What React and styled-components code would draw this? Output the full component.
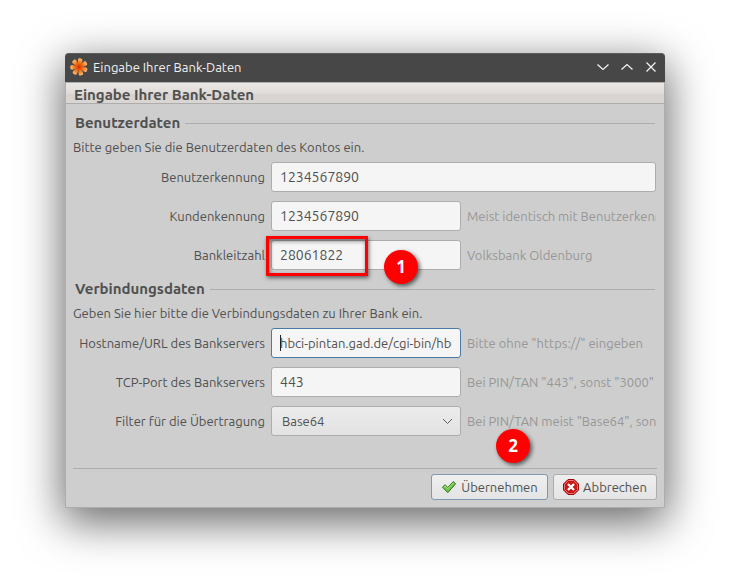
import React from 'react';
import styled, { createGlobalStyle, css } from 'styled-components';

const GlobalStyle = createGlobalStyle`
  *, *::before, *::after { box-sizing: border-box; }
  body {
    margin: 0;
    background: #ffffff;
    color: #505050;
    font: 13px/20px Ubuntu, "Noto Sans", sans-serif;
    overflow: hidden;
  }
  button, input, select { font: inherit; color: inherit; }
`;

const Desktop = styled.main`
  padding: 53px 65px 77px;
`;

const Window = styled.section`
  border-radius: 4px 4px 0 0;
  background: #cecece;
  box-shadow: 0 12px 44px 2px rgba(0, 0, 0, 0.6);
`;

const TitleBar = styled.header`
  display: flex;
  align-items: center;
  gap: 5px;
  height: 29px;
  padding: 0 7px 2px 5px;
  border-top: 1px solid #5c5c5c;
  border-radius: 4px 4px 0 0;
  background: #474747;
  color: #f0f0f0;
`;

const Title = styled.span`
  flex: 1;
`;

const WindowControls = styled.div`
  display: flex;
  gap: 10px;
`;

const WindowButton = styled.button`
  display: flex;
  padding: 0;
  border: 0;
  background: none;
`;

const Body = styled.div`
  border: 1px solid #adadad;
`;

const Banner = styled.h1`
  margin: 0;
  height: 21px;
  padding: 0 8px;
  border-bottom: 1px solid #adadad;
  background: linear-gradient(#e9e6e3, #dfdbd8 55%, #d8d3d0 56%, #dad6d3);
  font-size: 15px;
  line-height: 24px;
`;

const Form = styled.form`
  padding: 9px 8px 7px 7px;
`;

const Group = styled.section`
  margin-bottom: 9px;
`;

const GroupTitle = styled.h2`
  display: flex;
  align-items: center;
  gap: 5px;
  margin: 0 1px 4px 2px;
  font-size: 15px;
  line-height: 20px;

  &::after {
    content: "";
    flex: 1;
    height: 1px;
    background: #adadad;
  }
`;

const Intro = styled.p`
  margin: 0 0 5px;
`;

const Rows = styled.div`
  display: grid;
  gap: 9px;
`;

const Row = styled.div`
  display: grid;
  grid-template-columns: 192px ${(p) => (p.$wide ? '1fr' : '190px minmax(0, 1fr)')};
  align-items: center;
  column-gap: 6px;
`;

const Label = styled.label`
  text-align: right;
  white-space: nowrap;
`;

const Hint = styled.span`
  overflow: hidden;
  white-space: nowrap;
  color: #979797;
`;

const field = css`
  width: 100%;
  height: 30px;
  border: 1px solid #adadad;
  border-radius: 3px;
  outline: none;
`;

const TextInput = styled.input`
  ${field}
  padding: 0 8px;
  border-color: ${(p) => (p.$active ? '#4a7ba6' : '#adadad')};
  background: #f5f5f5;
  font-size: ${(p) => (p.inputMode === 'numeric' ? '14px' : '13px')};
`;

const FieldBox = styled.div`
  position: relative;
`;

const Caret = styled.span`
  position: absolute;
  left: 9px;
  top: 7px;
  width: 1px;
  height: 16px;
  background: #202020;
`;

const Select = styled.select`
  ${field}
  padding: 0 10px;
  appearance: none;
  background: linear-gradient(#ececec, #e2e2e2);
`;

const SelectArrow = styled.svg`
  position: absolute;
  right: 8px;
  top: 12px;
  pointer-events: none;
`;

const Highlight = styled.span`
  position: absolute;
  left: -5px;
  top: -4px;
  width: 102px;
  height: 40px;
  border: 3px solid #ff0000;
  box-shadow: 1px 2px 4px rgba(0, 0, 0, 0.55), inset 1px 2px 4px rgba(0, 0, 0, 0.5);
  pointer-events: none;
`;

const Badge = styled.span`
  position: absolute;
  left: ${(p) => p.$left};
  top: ${(p) => p.$top};
  width: 34px;
  height: 34px;
  border-radius: 50%;
  background: #ff0000;
  box-shadow: 2px 2px 4px rgba(0, 0, 0, 0.6);
  color: #ffffff;
  font: bold 17px/34px "Open Sans", sans-serif;
  text-align: center;
  pointer-events: none;
`;

const Actions = styled.footer`
  position: relative;
  display: flex;
  justify-content: flex-end;
  gap: 5px;
  margin: 32px -1px 0 0;
  padding-top: 5px;
  border-top: 1px solid #adadad;
`;

const ActionButton = styled.button`
  display: flex;
  align-items: center;
  justify-content: center;
  gap: 4px;
  width: ${(p) => (p.$primary ? '117px' : '104px')};
  height: 26px;
  padding: 0;
  border: 1px solid ${(p) => (p.$primary ? '#7d98b0' : '#adadad')};
  border-radius: 3px;
  background: linear-gradient(#efefef, #e4e4e4);
  white-space: nowrap;
`;

function FlowerIcon() {
  return (
    <svg width="18" height="18" viewBox="0 0 18 18" aria-hidden="true">
      <defs>
        <radialGradient id="petal" gradientUnits="userSpaceOnUse" cx="9" cy="9" r="9">
          <stop offset="0" stopColor="#d42a00" />
          <stop offset="0.4" stopColor="#f06a10" />
          <stop offset="1" stopColor="#ffc078" />
        </radialGradient>
      </defs>
      {[10, 61, 113, 164, 216, 267, 319].map((angle) => (
        <path
          key={angle}
          d="M8.2 9 6.9 3.2C6.3.9 7.4.1 9 .3c1.6-.2 2.7.6 2.1 2.9L9.8 9Z"
          fill="url(#petal)"
          transform={`rotate(${angle} 9 9)`}
        />
      ))}
    </svg>
  );
}

function ControlIcon({ d }) {
  return (
    <svg width="14" height="14" viewBox="0 0 14 14" fill="none" stroke="#f5f5f5" strokeWidth="1.2" aria-hidden="true">
      <path d={d} />
    </svg>
  );
}

function CheckIcon() {
  return (
    <svg width="16" height="16" viewBox="0 0 16 16" aria-hidden="true">
      <path d="M1.5 8.2 4 5.7l2.7 2.8 5.6-6 2.3 2.2-7.8 9Z" fill="#73c04c" stroke="#2c7d19" strokeLinejoin="round" />
      <path d="m3 8.2 1.2-1 2.5 2.6 5.7-6" fill="none" stroke="#b0e38b" />
    </svg>
  );
}

function CancelIcon() {
  return (
    <svg width="16" height="16" viewBox="0 0 16 16" aria-hidden="true">
      <path d="M5 .5h6L15.5 5v6L11 15.5H5L.5 11V5Z" fill="#cc1515" stroke="#9b0808" />
      <path d="M5.4 1.5h5.2l3.9 3.9v5.2l-3.9 3.9H5.4l-3.9-3.9V5.4Z" fill="none" stroke="#e77777" />
      <path d="m5 5 6 6m0-6-6 6" stroke="#ffffff" strokeWidth="2.4" />
    </svg>
  );
}

function TextRow({ id, label, value, hint, active, marker }) {
  return (
    <Row $wide={!hint}>
      <Label htmlFor={id}>{label}</Label>
      <FieldBox>
        <TextInput
          id={id}
          defaultValue={value}
          inputMode={/^\d+$/.test(value) ? 'numeric' : 'url'}
          $active={active}
        />
        {active && <Caret />}
        {marker && <Highlight />}
        {marker && <Badge $left="113px" $top="10px">{marker}</Badge>}
      </FieldBox>
      {hint && <Hint>{hint}</Hint>}
    </Row>
  );
}

export default function App() {
  return (
    <Desktop>
      <GlobalStyle />
      <Window>
        <TitleBar>
          <FlowerIcon />
          <Title>Eingabe Ihrer Bank-Daten</Title>
          <WindowControls>
            <WindowButton aria-label="Minimieren"><ControlIcon d="m1.5 4.5 5.5 5 5.5-5" /></WindowButton>
            <WindowButton aria-label="Maximieren"><ControlIcon d="m1.5 9.5 5.5-5 5.5 5" /></WindowButton>
            <WindowButton aria-label="Schließen"><ControlIcon d="m2.5 2.5 9 9m0-9-9 9" /></WindowButton>
          </WindowControls>
        </TitleBar>
        <Body>
          <Banner>Eingabe Ihrer Bank-Daten</Banner>
          <Form onSubmit={(e) => e.preventDefault()}>
            <Group>
              <GroupTitle>Benutzerdaten</GroupTitle>
              <Intro>Bitte geben Sie die Benutzerdaten des Kontos ein.</Intro>
              <Rows>
                <TextRow id="user" label="Benutzerkennung" value="1234567890" />
                <TextRow id="customer" label="Kundenkennung" value="1234567890" hint="Meist identisch mit Benutzerkennung" />
                <TextRow id="blz" label="Bankleitzahl" value="28061822" hint="Volksbank Oldenburg" marker="1" />
              </Rows>
            </Group>
            <Group>
              <GroupTitle>Verbindungsdaten</GroupTitle>
              <Intro>Geben Sie hier bitte die Verbindungsdaten zu Ihrer Bank ein.</Intro>
              <Rows>
                <TextRow id="host" label="Hostname/URL des Bankservers" value="hbci-pintan.gad.de/cgi-bin/hbciservlet" hint={'Bitte ohne "https://" eingeben'} active />
                <TextRow id="port" label="TCP-Port des Bankservers" value="443" hint={'Bei PIN/TAN "443", sonst "3000"'} />
                <Row>
                  <Label htmlFor="filter">Filter für die Übertragung</Label>
                  <FieldBox>
                    <Select id="filter" defaultValue="Base64">
                      <option>Base64</option>
                    </Select>
                    <SelectArrow width="11" height="7" viewBox="0 0 11 7" fill="none" stroke="#606060" aria-hidden="true">
                      <path d="m1 1 4.5 4.5L10 1" />
                    </SelectArrow>
                  </FieldBox>
                  <Hint>{'Bei PIN/TAN meist "Base64", sonst "None"'}</Hint>
                </Row>
              </Rows>
            </Group>
            <Actions>
              <Badge $left="calc(100% - 161px)" $top="-40px">2</Badge>
              <ActionButton type="submit" $primary><CheckIcon />Übernehmen</ActionButton>
              <ActionButton type="button"><CancelIcon />Abbrechen</ActionButton>
            </Actions>
          </Form>
        </Body>
      </Window>
    </Desktop>
  );
}
